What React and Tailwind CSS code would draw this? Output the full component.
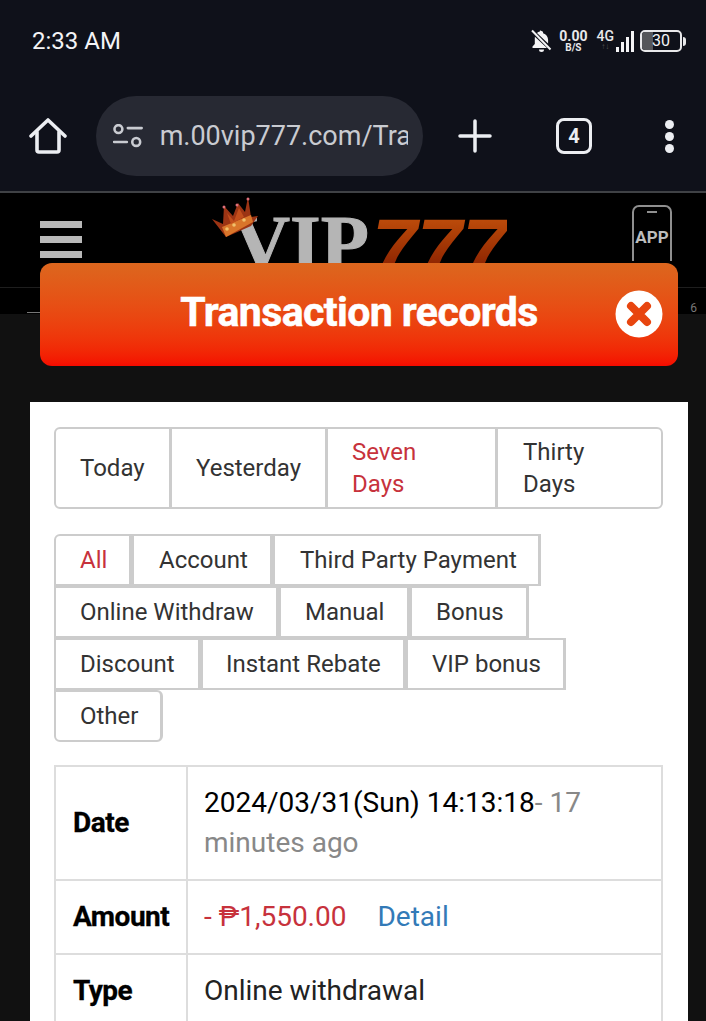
import React from "react";

const rangeTabs = [
  { label: "Today", cls: "w-[116px] pl-[24px] rounded-l-md" },
  { label: "Yesterday", cls: "w-[156px] pl-[24px]" },
  { label: "Seven Days", cls: "w-[170px] pl-[24px] pr-[60px] text-[#c7323c]" },
  { label: "Thirty Days", cls: "w-[163px] pl-[25px] pr-[60px] rounded-r-md" },
];

const typeRows = [
  [
    { label: "All", cls: "w-[78px] pl-[24px] text-[#c7323c] rounded-tl-md" },
    { label: "Account", cls: "w-[141px] pl-[25px]" },
    { label: "Third Party Payment", cls: "w-[268px] pl-[25px]" },
  ],
  [
    { label: "Online Withdraw", cls: "w-[225px] pl-[24px]" },
    { label: "Manual", cls: "w-[131px] pl-[24px]" },
    { label: "Bonus", cls: "w-[119px] pl-[24px]" },
  ],
  [
    { label: "Discount", cls: "w-[147px] pl-[24px]" },
    { label: "Instant Rebate", cls: "w-[205px] pl-[23px]" },
    { label: "VIP bonus", cls: "w-[160px] pl-[24px]" },
  ],
  [{ label: "Other", cls: "w-[109px] pl-[24px] rounded-b-md rounded-tr-md" }],
];

function HomeIcon() {
  return (
    <svg width="38" height="38" viewBox="0 0 38 38" fill="none" stroke="#eceef2" strokeWidth="3.6" strokeLinejoin="round" strokeLinecap="round">
      <path d="M2 19 19 3l17 16" />
      <path d="M8 15v18a2 2 0 0 0 2 2h18a2 2 0 0 0 2-2V15" />
    </svg>
  );
}

function SiteInfoIcon() {
  return (
    <svg width="30" height="24" viewBox="0 0 30 24" fill="none" stroke="#c9cbd1" strokeWidth="2.6" strokeLinecap="round">
      <circle cx="5.500" cy="5" r="4" />
      <path d="M15 4h14" />
      <circle cx="23.500" cy="18" r="4" />
      <path d="M1 18h13" />
    </svg>
  );
}

function BellOffIcon() {
  return (
    <svg width="21" height="24" viewBox="0 0 21 24" fill="#f4f4f6">
      <path d="M10.5 2a1.6 1.6 0 0 1 1.6 1.6v.7c3.1.8 5 3.5 5 6.7v3.4L6 3.900c.8-.6 1.600-1 2.900-1.300v-1A1.600 1.600 0 0 1 10.500 2Z" />
      <path d="M3.900 7.700 16 19H1.500v-1.500l2.300-2.500V11c0-1.200 0-2.300.1-3.300Z" />
      <path d="M8 20.500h5a2.500 2.500 0 0 1-5 0Z" />
      <path d="M1 1.500 19.500 20.500" stroke="#f4f4f6" strokeWidth="2" />
    </svg>
  );
}

function SignalIcon() {
  return (
    <div className="flex items-end gap-[2px] h-[21px]">
      <div className="w-[3px] h-[5px] bg-[#f4f4f6]" />
      <div className="w-[3px] h-[10px] bg-[#f4f4f6]" />
      <div className="w-[3px] h-[15px] bg-[#f4f4f6]" />
      <div className="w-[3px] h-[21px] bg-[#f4f4f6]" />
    </div>
  );
}

function Crown() {
  return (
    <svg width="48" height="42" viewBox="0 0 48 42" className="absolute left-[-22px] top-[-17px]">
      <path d="M1 23 12 28 13 10 22 20 27 7 34 16 37 1 40 21 47 20 40 30 15 41Z" fill="#9c3414" />
      <path d="M11 31 40 19 42 26 15 41Z" fill="#d9752a" />
      <path d="M16 17 23 25 28 12 33 21 20 28Z" fill="#c24e1c" />
      <circle cx="23" cy="29" r="1.800" fill="#f0c06a" />
      <circle cx="16" cy="33" r="1.800" fill="#f0c06a" />
      <circle cx="33" cy="24" r="1.800" fill="#f0c06a" />
      <circle cx="37" cy="3" r="1.500" fill="#e0707a" />
      <circle cx="13" cy="11" r="1.500" fill="#e0707a" />
      <circle cx="26" cy="9" r="1.500" fill="#e0707a" />
    </svg>
  );
}

function CloseIcon() {
  return (
    <svg width="48" height="48" viewBox="0 0 48 48">
      <circle cx="24" cy="24" r="23.500" fill="#fff" />
      <path d="M16 16 32 32M32 16 16 32" stroke="#e8450f" strokeWidth="8" strokeLinecap="round" />
    </svg>
  );
}

function BrowserChrome() {
  return (
    <div className="bg-[#0f111a] h-[193px] border-b-2 border-[#3f4145] text-white font-['Roboto',sans-serif]">
      <div className="flex items-center justify-between h-[82px] pl-8 pr-[20px]">
        <span className="text-[24px] text-[#f4f4f6]">2:33 AM</span>
        <div className="flex items-center">
          <BellOffIcon />
          <div className="flex flex-col items-center ml-[7px] font-bold text-[#e8e8ea]">
            <span className="text-[14px] leading-[14px]">0.00</span>
            <span className="text-[10px] leading-[10px]">B/S</span>
          </div>
          <div className="flex flex-col items-center ml-[9px] font-medium -mt-[3px]">
            <span className="text-[14px] leading-[14px] text-[#e8e8ea]">4G</span>
            <span className="text-[8px] leading-[8px] text-[#555]">↑↓</span>
          </div>
          <div className="ml-[2px]">
            <SignalIcon />
          </div>
          <div className="relative ml-[6px] w-[42px] h-[22px] border-2 border-[#e8e8ea] rounded-[5px] overflow-hidden flex items-center justify-center">
            <div className="absolute left-0 top-0 bottom-0 w-[11px] bg-[#55565a]" />
            <span className="relative text-[16px] text-[#f4f4f6]">30</span>
          </div>
          <div className="ml-[1px] w-[3px] h-[9px] bg-[#e8e8ea] rounded-r-sm" />
        </div>
      </div>
      <div className="flex items-center h-[96px] mt-[6px] pl-[29px]">
        <HomeIcon />
        <div className="ml-[29px] w-[327px] h-[80px] rounded-[40px] bg-[#272933] flex items-center pl-[17px] pr-[15px]">
          <SiteInfoIcon />
          <span className="ml-[17px] text-[27px] text-[#c9cbd1] whitespace-nowrap overflow-hidden">
            m.00vip777.com/Tra
          </span>
        </div>
        <svg width="34" height="34" viewBox="0 0 34 34" className="ml-[35px]" stroke="#eceef2" strokeWidth="3.500" strokeLinecap="round">
          <path d="M17 2v30M2 17h30" />
        </svg>
        <div className="ml-[64px] w-[36px] h-[36px] rounded-[8px] border-[3.500px] border-[#eceef2] flex items-center justify-center text-[20px] font-bold text-[#eceef2]">
          4
        </div>
        <div className="ml-[73px] flex flex-col gap-[3px]">
          <div className="w-[9px] h-[9px] rounded-full bg-[#eceef2]" />
          <div className="w-[9px] h-[9px] rounded-full bg-[#eceef2]" />
          <div className="w-[9px] h-[9px] rounded-full bg-[#eceef2]" />
        </div>
      </div>
    </div>
  );
}

function SiteHeader() {
  return (
    <div className="h-[121px] bg-black">
      <div className="h-[95px] border-b border-[#1e1e1e] flex items-start pl-[40px]">
        <div className="flex flex-col gap-[8px] mt-[28px]">
          <div className="w-[42px] h-[7px] bg-[#b9b9b9]" />
          <div className="w-[42px] h-[7px] bg-[#b9b9b9]" />
          <div className="w-[42px] h-[7px] bg-[#b9b9b9]" />
        </div>
        <div className="relative flex ml-[151px] mt-[20px] h-[76px] w-[280px] leading-none">
          <Crown />
          <span className="text-[79px] font-bold text-[#b5b5b5] font-['Liberation_Serif',serif] leading-[60px] [-webkit-text-stroke:1px_#b5b5b5]">
            VIP
          </span>
          <span className="ml-[3px] text-[81px] font-bold italic text-transparent bg-clip-text bg-gradient-to-b from-[#c2500c] to-[#7e1400] font-['Liberation_Sans',sans-serif] leading-[70px] h-[70px]">
            777
          </span>
        </div>
        <div className="relative ml-[119px] mt-[12px] w-[40px] h-[56px] rounded-t-[7px] border-2 border-b-0 border-[#8f8f8f] flex items-center justify-center pt-[8px] text-[17px] font-bold text-[#bdbdbd] font-['Roboto',sans-serif]">
          <div className="absolute top-[4px] w-[10px] h-[2px] bg-[#8f8f8f]" />
          APP
        </div>
      </div>
      <div className="flex justify-between items-end h-[25px] pl-[27px] pr-[9px] text-[12px] leading-none text-[#777] font-['Roboto',sans-serif]">
        <div className="w-[13px] h-px bg-[#777]" />
        <span className="-mb-[1px]">6</span>
      </div>
    </div>
  );
}

function TxRow({ label, className, children }) {
  return (
    <div className={`flex border-[#ddd] border-b-2 ${className}`}>
      <div className="w-[132px] shrink-0 border-r-2 border-[#ddd] pl-[17px] flex items-center text-[28px] font-bold text-black tracking-[-0.5px] [-webkit-text-stroke:0.3px_black]">
        {label}
      </div>
      <div className="flex-1 pl-[16px] pr-[10px] flex items-center text-[28px] leading-[40px]">{children}</div>
    </div>
  );
}

function RecordsModal() {
  return (
    <div className="absolute left-0 right-0 top-[263px] bottom-0">
      <div className="ml-[40px] mr-[28px] h-[103px] rounded-[12px] bg-gradient-to-b from-[#dc661e] to-[#f50a00] flex items-center relative">
        <h1 className="flex-1 text-center pb-[3px] text-[41px] font-bold text-white tracking-[-0.6px] font-['Roboto',sans-serif] [-webkit-text-stroke:0.5px_white]">
          Transaction records
        </h1>
        <div className="absolute right-[15px] top-[27px]">
          <CloseIcon />
        </div>
      </div>
      <div className="ml-[30px] mr-[18px] mt-[36px] bg-white h-[700px] pl-[24px] pt-[25px] font-['Roboto',sans-serif] text-[#333]">
        <div className="flex h-[82px] border-2 border-[#ccc] rounded-md w-[609px]">
          {rangeTabs.map((t, i) => (
            <div
              key={t.label}
              className={`flex items-center text-[24px] leading-[32px] ${i < 3 ? "border-r-[3px] border-[#ccc]" : ""} ${t.cls}`}
            >
              {t.label}
            </div>
          ))}
        </div>
        <div className="mt-[25px] flex flex-col">
          {typeRows.map((row, i) => (
            <div key={i} className="flex h-[52px]">
              {row.map((t) => (
                <div
                  key={t.label}
                  className={`flex items-center text-[24px] whitespace-nowrap border-2 border-r-[3px] border-[#ccc] ${t.cls}`}
                >
                  {t.label}
                </div>
              ))}
            </div>
          ))}
        </div>
        <div className="mt-[23px] border-2 border-b-0 border-[#ddd] w-[609px]">
          <TxRow label="Date" className="h-[114px]">
            <div>
              <span className="text-black">2024/03/31(Sun) 14:13:18</span>
              <span className="text-[#888]">- 17 minutes ago</span>
            </div>
          </TxRow>
          <TxRow label="Amount" className="h-[74px]">
            <span className="text-[#c7323c]">- ₱1,550.00</span>
            <span className="ml-[31px] text-[#337ab7]">Detail</span>
          </TxRow>
          <TxRow label="Type" className="h-[74px]">
            <span className="text-[#222]">Online withdrawal</span>
          </TxRow>
        </div>
      </div>
    </div>
  );
}

export default function App() {
  return (
    <div className="relative h-[1021px] w-[706px] overflow-hidden bg-[#111111]">
      <BrowserChrome />
      <SiteHeader />
      <RecordsModal />
    </div>
  );
}
